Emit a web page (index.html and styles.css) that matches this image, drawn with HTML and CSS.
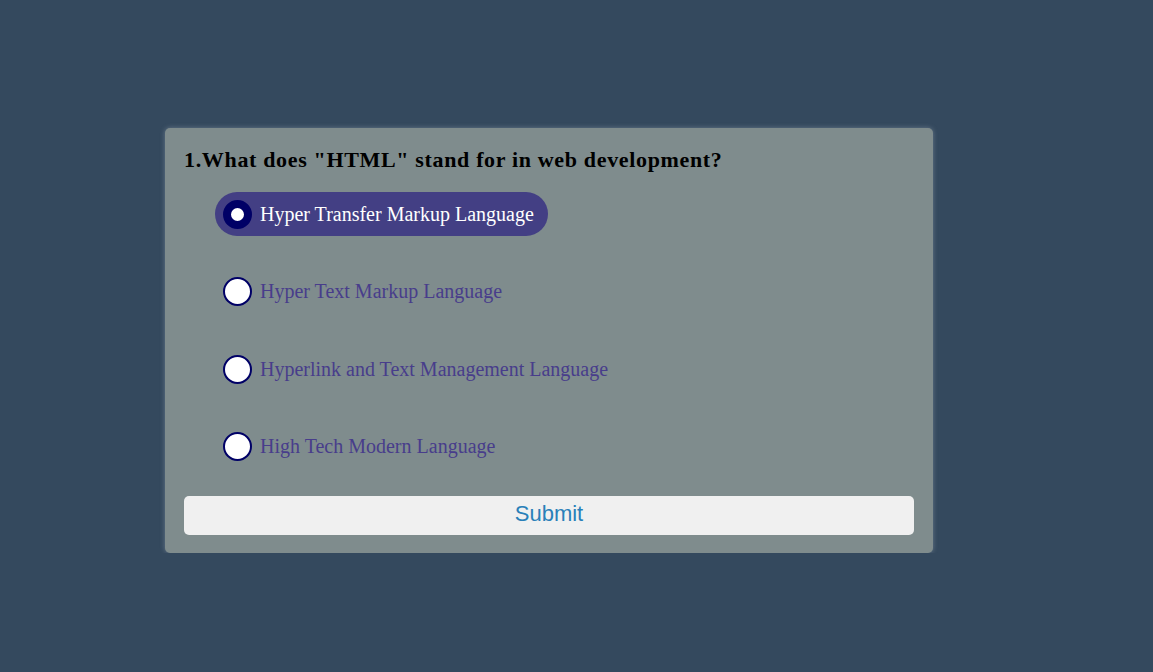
FILE: index.html
```html
<!DOCTYPE html>
<html>
<head>
<meta charset="utf-8">
<link rel="stylesheet" href="styles.css">
</head>
<body>
<div class="card">
  <h2 class="question">1.What does "HTML" stand for in web development?</h2>
  <ul class="options">
    <li class="option selected"><span class="radio"></span><span class="label">Hyper Transfer Markup Language</span></li>
    <li class="option"><span class="radio"></span><span class="label">Hyper Text Markup Language</span></li>
    <li class="option"><span class="radio"></span><span class="label">Hyperlink and Text Management Language</span></li>
    <li class="option"><span class="radio"></span><span class="label">High Tech Modern Language</span></li>
  </ul>
  <button class="submit">Submit</button>
</div>
</body>
</html>
```
FILE: styles.css
```css
html, body {
  margin: 0;
  padding: 0;
  background: #34495e;
  font-family: "Liberation Serif", "Times New Roman", serif;
}
body {
  padding: 128px 0 0 165px;
}
.card {
  width: 730px;
  padding: 19px 19px 18px 19px;
  background: #7f8c8d;
  border-radius: 5px;
  box-shadow: 0 0 5px rgba(200, 210, 220, 0.35);
}
.question {
  margin: 0;
  font-size: 22px;
  font-weight: bold;
  color: #000;
  letter-spacing: 0.66px;
  line-height: 26px;
}
.options {
  list-style: none;
  margin: 19px 0 0 31px;
  padding: 0;
  display: flex;
  flex-direction: column;
  align-items: flex-start;
  gap: 33.5px;
}
.option {
  display: flex;
  align-items: center;
  gap: 8px;
  height: 44px;
  padding: 0 14px 0 8px;
  border-radius: 22px;
  font-size: 20px;
  color: #483d8b;
}
.option.selected {
  background: #433f84;
  color: #fff;
}
.radio {
  width: 25px;
  height: 25px;
  border: 2px solid #000066;
  border-radius: 50%;
  background: #fff;
  flex: none;
}
.option.selected .radio {
  width: 13px;
  height: 13px;
  border: 8px solid #000066;
}
.submit {
  display: block;
  width: 100%;
  height: 39px;
  margin-top: 27px;
  border: none;
  border-radius: 5px;
  background: #f0f0f0;
  color: #2980b9;
  font-family: "Liberation Sans", Arial, sans-serif;
  font-size: 22px;
  line-height: 36px;
  padding: 0 0 3px 0;
}
```
